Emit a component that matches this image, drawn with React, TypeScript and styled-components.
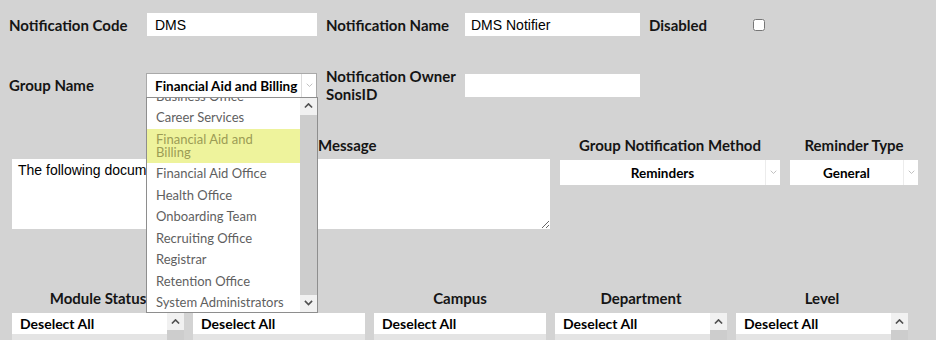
import React, { useLayoutEffect, useRef } from "react";
import styled, { createGlobalStyle } from "styled-components";

const GlobalStyle = createGlobalStyle`
  html, body {
    margin: 0;
    padding: 0;
    height: 340px;
    overflow: hidden;
    background: #d3d3d3;
  }
  body {
    font-family: Lato, "Open Sans", sans-serif;
    color: #151515;
  }
`;

const groups = [
  "Business Office",
  "Career Services",
  "Financial Aid and Billing",
  "Financial Aid Office",
  "Health Office",
  "Onboarding Team",
  "Recruiting Office",
  "Registrar",
  "Retention Office",
  "System Administrators",
];

// second column label sits under the open group list
const filters = [
  { label: "Module Status", scroll: true },
  { label: "", scroll: false },
  { label: "Campus", scroll: false },
  { label: "Department", scroll: true },
  { label: "Level", scroll: true },
];

const Chevron = ({ up, color = "#505050", w = 9 }: { up?: boolean; color?: string; w?: number }) => (
  <svg width={w} height={w * 0.6} viewBox="0 0 10 6">
    <polyline
      points={up ? "1,5 5,1 9,5" : "1,1 5,5 9,1"}
      fill="none"
      stroke={color}
      strokeWidth={color === "#505050" ? 1.8 : 1.2}
    />
  </svg>
);

const App = () => {
  const listRef = useRef<HTMLDivElement>(null);

  useLayoutEffect(() => {
    if (listRef.current) listRef.current.scrollTop = 12;
  }, []);

  return (
    <Page>
      <GlobalStyle />
      <TopGrid>
        <Label>Notification Code</Label>
        <TextInput defaultValue="DMS" pad={8} />
        <Label indent={9}>Notification Name</Label>
        <TextInput defaultValue="DMS Notifier" pad={6} />
        <Label indent={9}>Disabled</Label>
        <Check type="checkbox" />

        <Label>Group Name</Label>
        <GroupSelect>
          <SelectValue>Financial Aid and Billing</SelectValue>
          <ArrowCell>
            <Chevron color="#b5b5b5" w={7} />
          </ArrowCell>
          <DropList>
            <ListScroller ref={listRef}>
              {groups.map((g) => (
                <ListItem key={g} active={g === "Financial Aid and Billing"}>
                  {g}
                </ListItem>
              ))}
            </ListScroller>
            <ScrollBar>
              <ScrollArrow>
                <Chevron up />
              </ScrollArrow>
              <Thumb />
              <ScrollArrow>
                <Chevron />
              </ScrollArrow>
            </ScrollBar>
          </DropList>
        </GroupSelect>
        <Label indent={9}>
          Notification Owner
          <br />
          SonisID
        </Label>
        <TextInput defaultValue="" pad={6} />
        <span />
        <span />
      </TopGrid>

      <MessageGrid>
        <Label indent={306}>Message</Label>
        <Label center>Group Notification Method</Label>
        <Label center>Reminder Type</Label>
        <MessageArea defaultValue="The following documents are missing:" />
        <PlainSelect>
          <SelectValue center>Reminders</SelectValue>
          <ArrowCell light>
            <Chevron color="#b5b5b5" w={7} />
          </ArrowCell>
        </PlainSelect>
        <PlainSelect>
          <SelectValue center>General</SelectValue>
          <ArrowCell light>
            <Chevron color="#b5b5b5" w={7} />
          </ArrowCell>
        </PlainSelect>
      </MessageGrid>

      <FilterGrid>
        {filters.map((f, i) => (
          <Label center key={"l" + i}>
            {f.label || "\u00a0"}
          </Label>
        ))}
        {filters.map((f, i) => (
          <FilterBox key={"b" + i}>
            <FilterOptions>
              <FilterOption>Deselect All</FilterOption>
              <FilterOption muted />
            </FilterOptions>
            {f.scroll && (
              <BoxScroll>
                <ScrollArrow>
                  <Chevron up />
                </ScrollArrow>
                <Thumb />
              </BoxScroll>
            )}
          </FilterBox>
        ))}
      </FilterGrid>
    </Page>
  );
};

export default App;

const Page = styled.div`
  padding-top: 13px;
`;

const TopGrid = styled.div`
  display: grid;
  grid-template-columns: 138px 170px 148px 175px 113px auto;
  grid-template-rows: 23px 36px;
  row-gap: 31px;
  align-items: center;
  padding-left: 9px;
`;

const Label = styled.div<{ indent?: number; center?: boolean }>`
  font-size: 15px;
  font-weight: 700;
  line-height: 18px;
  color: #151515;
  padding-left: ${(p) => p.indent || 0}px;
  text-align: ${(p) => (p.center ? "center" : "left")};
  white-space: nowrap;
`;

const TextInput = styled.input<{ pad: number }>`
  box-sizing: border-box;
  height: 23px;
  width: 100%;
  border: none;
  outline: none;
  margin: 0;
  padding: 0 ${(p) => p.pad}px;
  background: #fff;
  font-family: "Liberation Sans", Arial, sans-serif;
  font-size: 14px;
  color: #000;
`;

const Check = styled.input`
  width: 12px;
  height: 12px;
  margin: 1px 0 0;
  justify-self: start;
`;

const GroupSelect = styled.div`
  position: relative;
  box-sizing: border-box;
  height: 25px;
  width: 171px;
  margin-left: -1px;
  display: flex;
  background: #fff;
  border: 1px solid #a9a9a9;
`;

const PlainSelect = styled.div`
  box-sizing: border-box;
  height: 25px;
  margin-top: 1px;
  display: flex;
  background: #fff;
`;

const SelectValue = styled.div<{ center?: boolean }>`
  flex: 1;
  padding-left: ${(p) => (p.center ? 0 : 8)}px;
  font-size: 13.5px;
  font-weight: 700;
  line-height: ${(p) => (p.center ? 27 : 24)}px;
  color: #000;
  text-align: ${(p) => (p.center ? "center" : "left")};
  white-space: nowrap;
  overflow: hidden;
`;

const ArrowCell = styled.div<{ light?: boolean }>`
  width: 14px;
  flex: none;
  display: flex;
  align-items: center;
  justify-content: center;
  border-left: 1px solid ${(p) => (p.light ? "#ececec" : "#dcdcdc")};
`;

const DropList = styled.div`
  position: absolute;
  z-index: 10;
  top: 23px;
  left: -1px;
  box-sizing: border-box;
  width: 172px;
  height: 216px;
  display: flex;
  background: #fff;
  border: 1px solid #8e8e8e;
`;

const ListScroller = styled.div`
  flex: 1;
  overflow: hidden;
`;

const ListItem = styled.div<{ active?: boolean }>`
  padding: 4.25px 12px 4.25px 9px;
  font-size: 13px;
  line-height: 13px;
  color: ${(p) => (p.active ? "#9c9c55" : "#5f5f5f")};
  background: ${(p) => (p.active ? "#eef39c" : "transparent")};
`;

const ScrollBar = styled.div`
  width: 17px;
  flex: none;
  display: flex;
  flex-direction: column;
  background: #f1f1f1;
`;

const ScrollArrow = styled.div`
  height: 17px;
  flex: none;
  display: flex;
  align-items: center;
  justify-content: center;
  background: #f1f1f1;
`;

const Thumb = styled.div`
  flex: 1;
  background: #cdcdcd;
`;

const MessageGrid = styled.div`
  display: grid;
  grid-template-columns: 538px 220px 128px;
  column-gap: 10px;
  row-gap: 5px;
  margin-top: 33px;
  padding-left: 12px;
  align-items: start;
`;

const MessageArea = styled.textarea`
  box-sizing: border-box;
  width: 538px;
  height: 70px;
  margin: 0;
  border: none;
  outline: none;
  padding: 3px 6px;
  background: #fff;
  font-family: "Liberation Sans", Arial, sans-serif;
  font-size: 14px;
  color: #000;
  resize: both;
`;

const FilterGrid = styled.div`
  display: grid;
  grid-template-columns: repeat(5, 172px);
  column-gap: 9px;
  row-gap: 6px;
  margin-top: 60px;
  padding-left: 12px;
`;

const FilterBox = styled.div`
  height: 60px;
  display: flex;
  background: #fff;
`;

const FilterOptions = styled.div`
  flex: 1;
`;

const FilterOption = styled.div<{ muted?: boolean }>`
  height: 21px;
  padding-left: 8px;
  font-size: 14px;
  font-weight: 700;
  line-height: 21px;
  color: #000;
  background: ${(p) => (p.muted ? "#e4e4e4" : "#fff")};
`;

const BoxScroll = styled.div`
  width: 17px;
  flex: none;
  display: flex;
  flex-direction: column;
`;
